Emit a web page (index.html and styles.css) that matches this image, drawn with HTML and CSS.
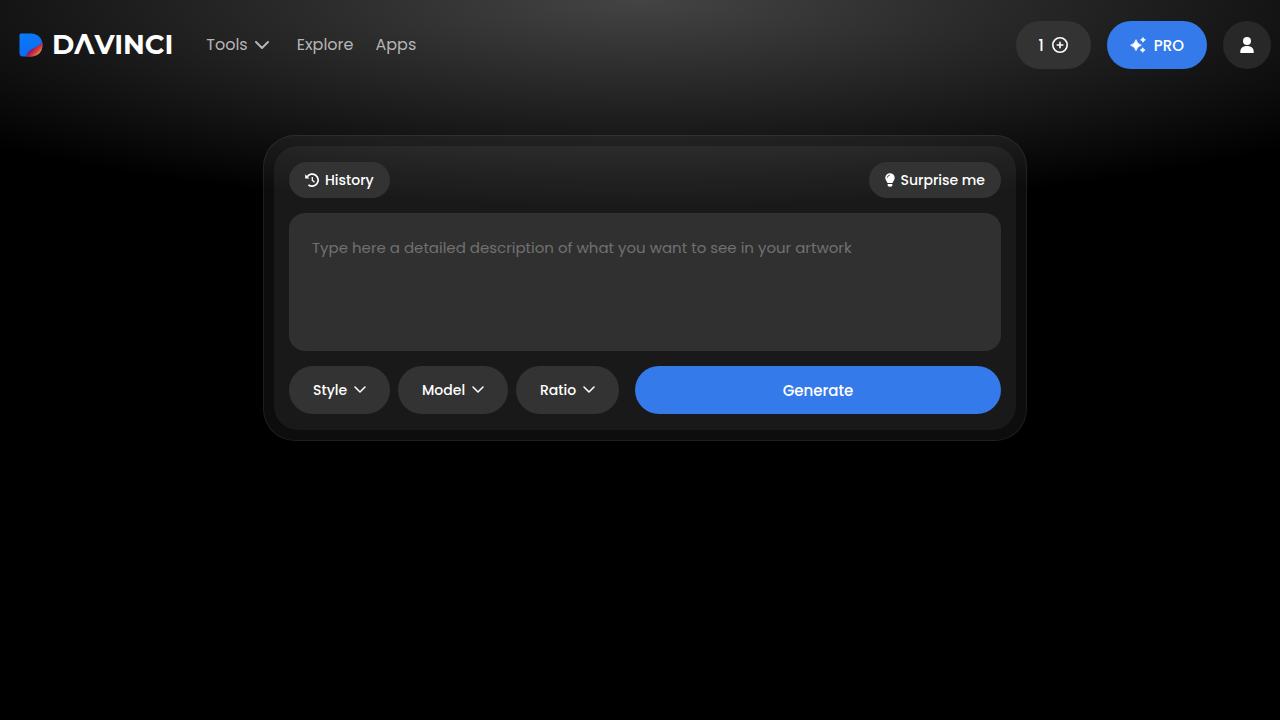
FILE: index.html
```
<!DOCTYPE html>
<html lang="en">
<head>
    <meta charset="UTF-8">
    <meta name="viewport" content="width=device-width, initial-scale=1.0">
    <title>DaVinci</title>
    <link rel="stylesheet" href="styles.css">
</head>
<body>
    <header class="header">
        <a class="logo" href="#" aria-label="DaVinci">
            <svg width="24" height="24" viewBox="0 0 24 24">
                <defs>
                    <linearGradient id="logo-blue" x1="0" y1="0" x2="0.3" y2="1">
                        <stop offset="0" stop-color="#0a7cf5"/>
                        <stop offset="1" stop-color="#0a6cf5"/>
                    </linearGradient>
                    <linearGradient id="logo-red" x1="0" y1="0" x2="1" y2="1">
                        <stop offset="0.2" stop-color="#4a1fb8"/>
                        <stop offset="0.45" stop-color="#9a1260"/>
                        <stop offset="0.65" stop-color="#d8402f"/>
                        <stop offset="0.8" stop-color="#f0904a"/>
                    </linearGradient>
                    <clipPath id="logo-shape">
                        <path d="M2 .5h10C19 .5 23.500 5.500 23.500 12S19 23.500 12 23.500H4Q.5 23.500.5 20V2Q.5.5 2 .5z"/>
                    </clipPath>
                </defs>
                <g clip-path="url(#logo-shape)">
                    <rect width="24" height="24" fill="url(#logo-blue)"/>
                    <path d="M7 24C10 13 20 17 24 7v17z" fill="url(#logo-red)"/>
                </g>
            </svg>
            <span class="logo-text">D&Lambda;VINCI</span>
        </a>

        <nav class="nav">
            <button class="nav-item" type="button">
                Tools
                <svg width="14" height="8" viewBox="0 0 14 8" fill="none" stroke="currentColor" stroke-width="2" stroke-linecap="round" stroke-linejoin="round"><path d="M1 1l6 6 6-6"/></svg>
            </button>
            <a class="nav-item" href="#">Explore</a>
            <a class="nav-item" href="#">Apps</a>
        </nav>

        <div class="actions">
            <button class="pill credits" type="button">
                1
                <svg width="16" height="16" viewBox="0 0 16 16" fill="none" stroke="currentColor" stroke-width="1.600" stroke-linecap="round"><circle cx="8" cy="8" r="7.200"/><path d="M8 5.200v5.600M5.200 8h5.600"/></svg>
            </button>
            <button class="pill primary pro" type="button">
                <svg width="16" height="16" viewBox="0 0 16 16" fill="currentColor" stroke="currentColor" stroke-width=".8" stroke-linejoin="round">
                    <path d="M6 2.700Q7 7 11.300 8.200 7 9.400 6 13.700 5 9.400.6 8.200 5 7 6 2.700z"/>
                    <path d="M13 .5q.4 1.900 2.400 2.300Q13.400 3.300 13 5.200q-.4-1.900-2.400-2.400Q12.600 2.400 13 .5zM12.700 10.700q.4 1.900 2.400 2.300-2 .5-2.400 2.400-.4-1.900-2.400-2.400 2-.4 2.400-2.300z"/>
                </svg>
                PRO
            </button>
            <button class="avatar" type="button" aria-label="Account">
                <svg width="14" height="16" viewBox="0 0 14 16" fill="currentColor"><circle cx="7" cy="4" r="4"/><path d="M.3 16v-1.500C.3 11.200 3 9 7 9s6.700 2.200 6.700 5.500V16z"/></svg>
            </button>
        </div>
    </header>

    <main class="main">
        <div class="card">
            <form class="card-inner">
                <div class="row spread">
                    <button class="pill small" type="button">
                        <svg width="14" height="14" viewBox="0 0 14 14" fill="none" stroke="currentColor" stroke-width="1.700"><path d="M2.200 3.700A6 6 0 1 1 3.400 11.800"/><path d="M7.300 4v3.200l2.200 2" stroke-width="1.300"/><path d="M.2 1.300v4.200h4.200z" fill="currentColor" stroke="none"/></svg>
                        History
                    </button>
                    <button class="pill small" type="button">
                        <svg width="10" height="14" viewBox="0 0 10 14"><path d="M5 .2a4.700 4.700 0 0 0-4.700 4.700c0 2 1.500 3 2.200 5.100h5C8.200 7.900 9.700 6.900 9.700 4.900A4.700 4.700 0 0 0 5 .2z" fill="currentColor"/><path d="M2.700 10.900h4.600v1.400Q6.800 13.800 5 13.800t-2.300-1.500z" fill="currentColor"/><path d="M2.300 4.800Q2.400 2.400 4.800 2.200" fill="none" stroke="#333" stroke-width=".8"/></svg>
                        Surprise me
                    </button>
                </div>

                <textarea class="prompt" aria-label="Description" placeholder="Type here a detailed description of what you want to see in your artwork"></textarea>

                <div class="row">
                    <div class="options">
                        <select class="pill option" aria-label="Style"><option>Style</option></select>
                        <select class="pill option" aria-label="Model"><option>Model</option></select>
                        <select class="pill option" aria-label="Ratio"><option>Ratio</option></select>
                    </div>
                    <button class="pill primary generate" type="button">Generate</button>
                </div>
            </form>
        </div>
    </main>
</body>
</html>
```
FILE: styles.css
```
* {
    box-sizing: border-box;
}

body {
    margin: 0;
    padding-left: 10px;
    min-height: 100vh;
    color: #fff;
    font-family: Poppins, Inter, sans-serif;
    font-size: 16px;
    background: #000 radial-gradient(71% 210px at 50% 0, #444, #000) no-repeat;
}

button,
select,
textarea {
    border: none;
    color: inherit;
    font-family: inherit;
}

button,
select {
    cursor: pointer;
}

.header {
    display: flex;
    align-items: center;
    padding: 21px 9px 0;
}

.logo {
    display: flex;
    align-items: center;
    gap: 9px;
    color: #fff;
    text-decoration: none;
}

.logo-text {
    font-family: Montserrat, Inter, sans-serif;
    font-size: 27px;
    font-weight: 700;
    line-height: 32px;
}

.nav {
    display: flex;
    align-items: center;
    gap: 22px;
    margin-left: 33px;
}

.nav-item {
    display: flex;
    align-items: center;
    gap: 7px;
    padding: 0;
    background: none;
    color: #b5b5b5;
    font-size: 16px;
    line-height: 24px;
    text-decoration: none;
}

.nav button {
    margin-right: 6px;
}

.actions {
    display: flex;
    gap: 16px;
    margin-left: auto;
}

.pill {
    display: flex;
    align-items: center;
    justify-content: center;
    gap: 8px;
    height: 48px;
    padding: 0 23px;
    border-radius: 24px;
    background-color: #333;
    font-size: 15px;
    font-weight: 500;
}

.primary {
    background-color: #347aea;
}

.avatar {
    display: flex;
    align-items: center;
    justify-content: center;
    width: 48px;
    height: 48px;
    padding: 0;
    border-radius: 50%;
    background: #282828;
}

.main {
    padding: 66px 16px 0;
}

.card {
    max-width: 764px;
    margin: 0 auto;
    padding: 10px;
    border: 1px solid rgba(255, 255, 255, 0.07);
    border-radius: 32px;
    background: rgba(255, 255, 255, 0.05);
}

.card-inner {
    display: flex;
    flex-direction: column;
    gap: 15px;
    padding: 16px 15px;
    border-radius: 24px;
    background: rgba(255, 255, 255, 0.05);
}

.row {
    display: flex;
    gap: 16px;
}

.spread {
    justify-content: space-between;
}

.small {
    height: 36px;
    padding: 0 16px;
    gap: 6px;
    font-size: 14px;
}

.prompt {
    display: block;
    width: 100%;
    height: 138px;
    padding: 23px;
    border-radius: 16px;
    background: #303030;
    font-size: 15px;
    line-height: 24px;
    resize: none;
    outline: none;
}

.prompt::placeholder {
    color: #717171;
}

.options {
    display: flex;
    gap: 8px;
}

.option {
    appearance: none;
    padding: 0 42px 0 24px;
    font-size: 14px;
    background-image: url("data:image/svg+xml,%3Csvg xmlns='http://www.w3.org/2000/svg' width='12' height='8' fill='none' stroke='white' stroke-width='1.5' stroke-linecap='round' stroke-linejoin='round'%3E%3Cpath d='M1 1l5 5 5-5'/%3E%3C/svg%3E");
    background-repeat: no-repeat;
    background-position: right 24px center;
}

.generate {
    flex: 1;
}
```
